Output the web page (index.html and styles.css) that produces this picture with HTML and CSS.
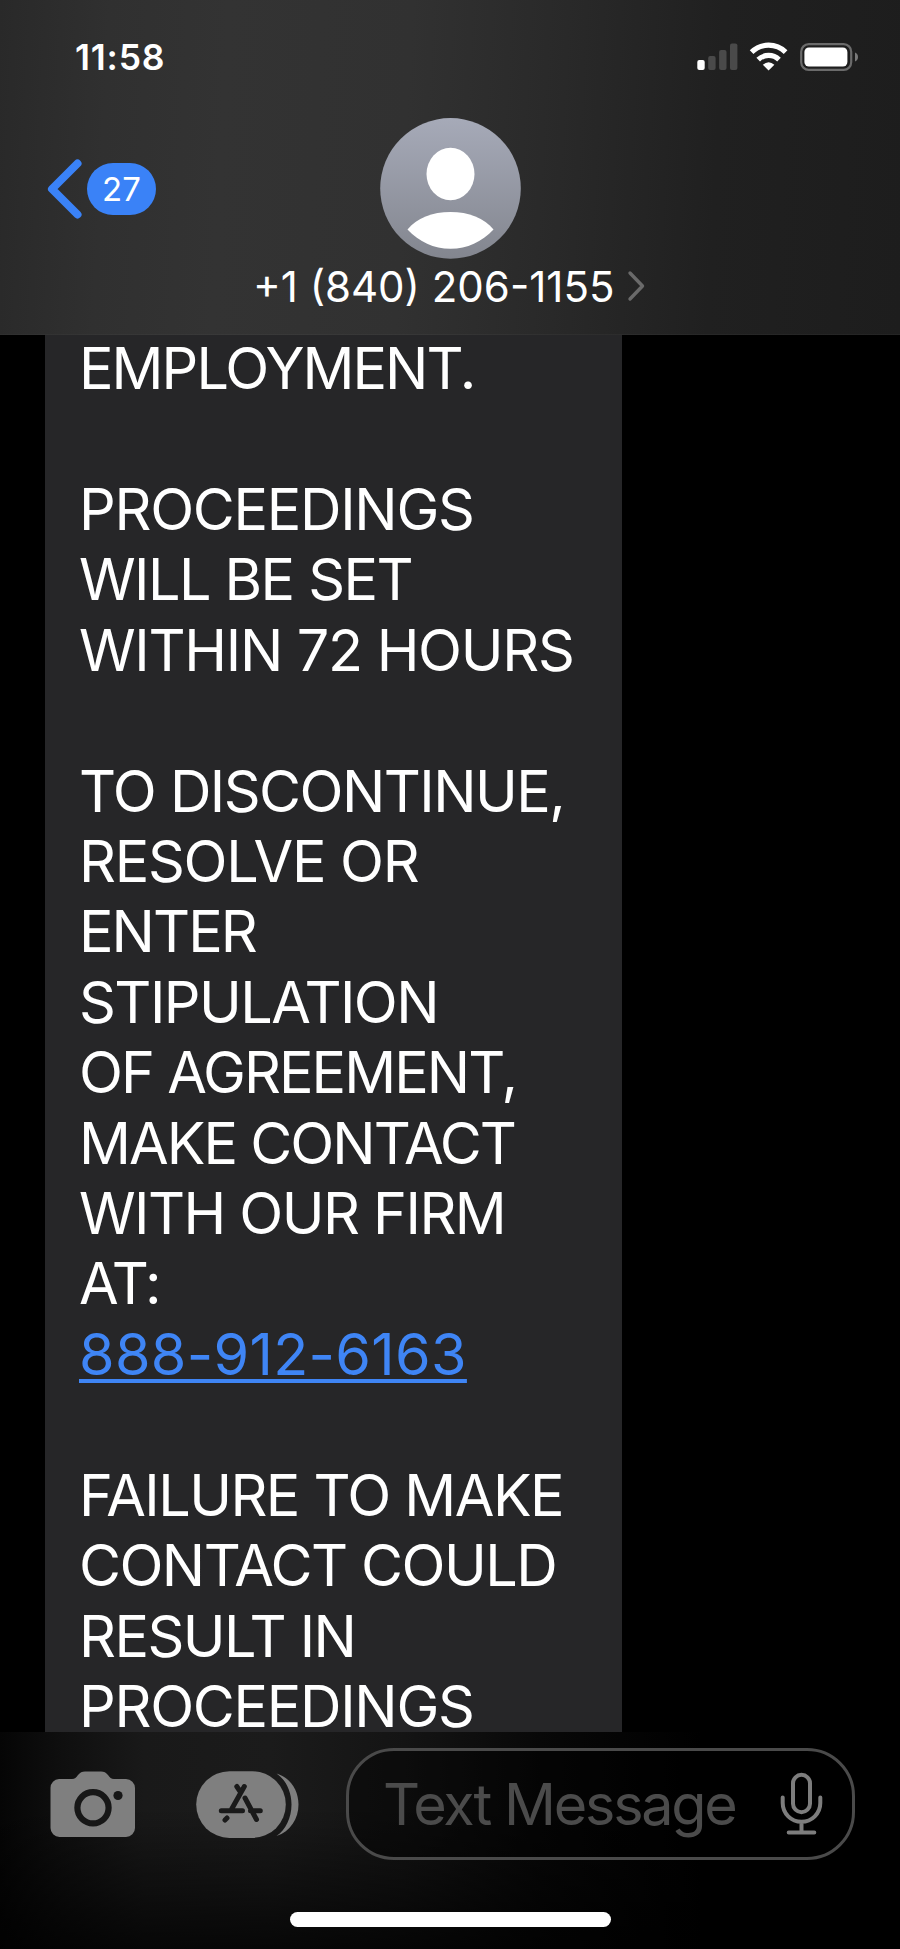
FILE: index.html
```html
<!DOCTYPE html>
<html lang="en">
<head>
    <meta charset="UTF-8">
    <meta name="viewport" content="width=device-width, initial-scale=1.0">
    <title>Messages</title>
    <link rel="stylesheet" href="styles.css">
</head>
<body>
    <div class="phone">
        <header class="header">
            <div class="status-bar">
                <span class="time">11:58</span>
                <svg class="status-icons" width="162" height="30" viewBox="697 42 162 30">
                    <!-- Signal -->
                    <rect x="697.3" y="60" width="7.4" height="10" rx="2" fill="#fff"/>
                    <g fill="#4a4a4a">
                        <rect x="708.2" y="56" width="7.4" height="14" rx="2"/>
                        <rect x="719.1" y="50" width="7.4" height="20" rx="2"/>
                        <rect x="730" y="43.5" width="7.4" height="26.5" rx="2"/>
                    </g>
                    <!-- Wifi -->
                    <g fill="none" stroke="#fff" stroke-width="5.2">
                        <path d="M751.6 52.2a24.2 24.2 0 0 1 34 0"/>
                        <path d="M758.2 59.6a15 15 0 0 1 20.8 0"/>
                    </g>
                    <path d="M762.8 64.8q5.8-5.2 11.6 0l-5.8 5.8z" fill="#fff"/>
                    <!-- Battery -->
                    <rect x="801.2" y="44.2" width="50" height="25.6" rx="7.5" fill="none" stroke="#6b6b6b" stroke-width="2.2"/>
                    <rect x="804.4" y="47.4" width="43" height="19.2" rx="4.5" fill="#fff"/>
                    <path d="M855 52.4q3 1.2 3 4.6t-3 4.6z" fill="#7a7a7a"/>
                </svg>
            </div>
            <div class="nav">
                <a class="back">
                    <svg width="36" height="62" viewBox="0 0 36 62">
                        <path d="M31.5 5.5L6 31l25.5 25.5" fill="none" stroke="#3a82f7" stroke-width="8" stroke-linecap="round" stroke-linejoin="round"/>
                    </svg>
                    <span class="badge">27</span>
                </a>
                <svg class="avatar" width="141" height="141" viewBox="379.5 118 141 141">
                    <defs>
                        <linearGradient id="avatarFill" x1="0" y1="0" x2="0" y2="1">
                            <stop offset="0" stop-color="#a6aab8"/>
                            <stop offset="1" stop-color="#83868f"/>
                        </linearGradient>
                    </defs>
                    <circle cx="450" cy="188.4" r="70.3" fill="url(#avatarFill)"/>
                    <ellipse cx="450" cy="174" rx="24" ry="26.2" fill="#fff"/>
                    <path d="M407 229.5C416 218 432 212 450 212s34 6 43 17.5C481 242 467 248.7 450 248.7S419 242 407 229.5z" fill="#fff"/>
                </svg>
            </div>
            <div class="contact">
                <span class="contact-name">+1 (840) 206-1155</span>
                <svg width="18" height="32" viewBox="0 0 18 32">
                    <path d="M3 3l12.5 13L3 29" fill="none" stroke="#6a6a6a" stroke-width="3.4" stroke-linecap="round" stroke-linejoin="round"/>
                </svg>
            </div>
        </header>

        <main class="thread">
            <div class="bubble">
                <span class="line tight">EMPLOYMENT.</span>
                <span class="line"></span>
                <span class="line loose">PROCEEDINGS</span>
                <span class="line">WILL BE SET</span>
                <span class="line loose">WITHIN 72 HOURS</span>
                <span class="line"></span>
                <span class="line">TO DISCONTINUE,</span>
                <span class="line loose">RESOLVE OR</span>
                <span class="line tight">ENTER</span>
                <span class="line">STIPULATION</span>
                <span class="line tight">OF AGREEMENT,</span>
                <span class="line tight">MAKE CONTACT</span>
                <span class="line">WITH OUR FIRM</span>
                <span class="line tight">AT:</span>
                <span class="line"><a class="phone-link">888-912-6163</a></span>
                <span class="line"></span>
                <span class="line">FAILURE TO MAKE</span>
                <span class="line">CONTACT COULD</span>
                <span class="line">RESULT IN</span>
                <span class="line loose">PROCEEDINGS</span>
            </div>
        </main>

        <footer class="composer">
            <div class="composer-row">
                <svg class="camera" width="86" height="67" viewBox="50 1770.5 86 67">
                    <path d="M59 1778.5h13c3 0 4-1.5 6-4s4-3.5 7-3.5h16c3 0 5 1 7 3.5s3 4 6 4h12a9 9 0 0 1 9 9v40a9 9 0 0 1-9 9H59.5a9 9 0 0 1-9-9v-40a9 9 0 0 1 8.5-9z" fill="#7f7f7f"/>
                    <circle cx="93" cy="1807.3" r="15.6" fill="none" stroke="#171717" stroke-width="6.2"/>
                    <circle cx="118" cy="1795" r="4.6" fill="#171717"/>
                </svg>
                <svg class="apps" width="103" height="67" viewBox="195.5 1770.5 103 67">
                    <rect x="195.7" y="1770.8" width="89.6" height="66.6" rx="33.3" fill="#7f7f7f"/>
                    <path d="M276 1773c14 4 22 17 22 31s-8 27-22 31.5c9-6 15-18 15-31.5s-6-25-15-31z" fill="#7f7f7f"/>
                    <path d="M243.8 1786l-12.6 22.5M236.3 1786l3.7 5.5M244.5 1797.5L256 1819M226.5 1817.5l-2 2M220.8 1810.3H242M250 1810.3h9.8" fill="none" stroke="#1a1a1a" stroke-width="5" stroke-linecap="round"/>
                </svg>
                <div class="message-input">
                    <span class="placeholder">Text Message</span>
                    <svg class="mic" width="43" height="64" viewBox="780.5 1771 43 64">
                        <g fill="none" stroke="#7d7d7d" stroke-width="4" stroke-linecap="round">
                            <rect x="793.5" y="1773.8" width="17" height="37.4" rx="8.5"/>
                            <path d="M783.2 1796.5v5.5a18.8 18.8 0 0 0 37.6 0v-5.5M802 1821v9M789.2 1831.5h25.6"/>
                        </g>
                    </svg>
                </div>
            </div>
            <div class="home-indicator"></div>
        </footer>
    </div>
</body>
</html>
```
FILE: styles.css
```css
* {
    margin: 0;
    padding: 0;
    box-sizing: border-box;
}

body {
    font-family: Inter, "Liberation Sans", sans-serif;
    background: #000;
    color: #fff;
}

.phone {
    width: 900px;
    height: 1949px;
    display: flex;
    flex-direction: column;
}

/* Header */
.header {
    height: 335px;
    flex: none;
    background: linear-gradient(93deg, #292929 0%, #303030 12%, #333 25%, #313131 45%, #292929 62%, #202020 79%, #1d1d1d 100%);
    border-bottom: 1px solid rgba(255, 255, 255, 0.03);
}

.status-bar {
    height: 118px;
    padding: 36px 41px 0 75px;
    display: flex;
    justify-content: space-between;
}

.time {
    font-size: 35.5px;
    line-height: 43px;
    font-weight: 600;
    letter-spacing: 0.8px;
}

.status-icons {
    margin-top: 6px;
}

.nav {
    height: 141px;
    display: grid;
    grid-template-columns: 1fr auto 1fr;
    padding: 0 46px;
}

.back {
    display: flex;
    align-items: center;
    gap: 5px;
}

.badge {
    width: 69px;
    height: 52px;
    border-radius: 26px;
    background: #3a82f7;
    font-size: 33px;
    line-height: 52px;
    text-align: center;
}

.contact {
    display: flex;
    align-items: center;
    gap: 13px;
    height: 54px;
    padding-left: 253px;
}

.contact-name {
    font-size: 42px;
}

/* Messages */
.thread {
    height: 1397px;
    flex: none;
    padding-left: 45px;
}

.bubble {
    width: 577px;
    height: 100%;
    padding-left: 34px;
    background: #262628;
}

.line {
    display: block;
    height: 70.43px;
    font-size: 57.5px;
    line-height: 66px;
    letter-spacing: -1.55px;
    white-space: nowrap;
}

.line.tight {
    letter-spacing: -1.95px;
}

.line.loose {
    letter-spacing: -1.3px;
}

.phone-link {
    color: #3f85f5;
    letter-spacing: 0.33px;
    text-decoration: underline;
    text-decoration-thickness: 4px;
    text-underline-offset: 4px;
    text-decoration-skip-ink: none;
}

/* Composer */
.composer {
    flex: 1;
    background:
        linear-gradient(to bottom, rgba(0, 0, 0, 0) 35%, rgba(0, 0, 0, 0.75) 100%),
        linear-gradient(to right, #050505 0%, #0f0f0f 7%, #191919 16%, #1b1b1b 30%, #141414 45%, #080808 60%, #000 78%);
}

.composer-row {
    display: flex;
    align-items: center;
    height: 143px;
    padding: 0 45px 0 50px;
}

.camera {
    margin-top: 1px;
    margin-right: 60px;
}

.apps {
    margin-top: 1px;
    margin-right: 47px;
}

.message-input {
    flex: 1;
    height: 112px;
    display: flex;
    align-items: center;
    justify-content: space-between;
    padding: 0 29px 0 34px;
    border: 3px solid #4a4a4a;
    border-radius: 48px;
    background: rgba(0, 0, 0, 0.4);
}

.placeholder {
    font-size: 57.5px;
    letter-spacing: -2.25px;
    color: #4b4b4b;
}

.home-indicator {
    width: 321px;
    height: 15px;
    margin: 37px auto 0;
    border-radius: 8px;
    background: #fff;
}
```
